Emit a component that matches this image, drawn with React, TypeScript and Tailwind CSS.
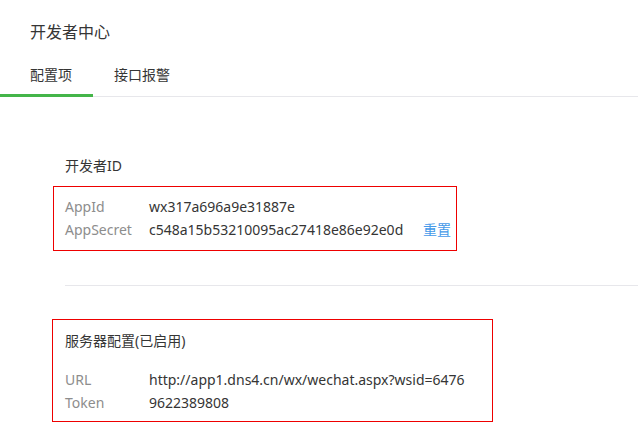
const Row = ({ label, value, extra }: { label: string; value: string; extra?: string }) => {
  return (
    <div className="flex h-[23px] items-center leading-[23px]">
      <span className="w-[84px] shrink-0 text-[#8d8d8d]">{label}</span>
      <span className="whitespace-nowrap text-[#353535]">{value}</span>
      {extra && <a className="ml-auto mr-[5px] cursor-pointer text-[#459ae9]">{extra}</a>}
    </div>
  );
};

const App = () => {
  return (
    <div
      className="h-[439px] w-[638px] overflow-hidden bg-white text-[14px] text-[#353535]"
      style={{ fontFamily: '"Noto Sans", "Noto Sans CJK SC", sans-serif' }}
    >
      <h1 className="pl-[30px] pt-[20px] text-[16px] leading-6 font-normal">开发者中心</h1>

      <div className="flex border-b border-[#e7e7eb]">
        <div className="-mb-px w-[93px] border-b-[3px] border-[#44b549] pb-[8px] pl-[30px] pt-[20px] leading-[22px]">
          配置项
        </div>
        <div className="-mb-px pb-[8px] pl-[21px] pt-[20px] leading-[22px]">接口报警</div>
      </div>

      <div className="pl-[65px] pt-[58px] leading-[22px]">开发者ID</div>

      <div className="ml-[53px] mt-[9px] h-[65px] w-[404px] border border-[#ee0000] pb-[8px] pl-[11px] pt-[8px]">
        <Row label="AppId" value="wx317a696a9e31887e" />
        <Row label="AppSecret" value="c548a15b53210095ac27418e86e92e0d" extra="重置" />
      </div>

      <div className="ml-[65px] mt-[34px] border-t border-[#e7e7eb]"></div>

      <div className="ml-[52px] mt-[33px] h-[103px] w-[441px] border border-[#ee0000] pl-[12px] pt-[10px]">
        <div className="leading-[22px]">服务器配置(已启用)</div>
        <div className="mt-[16px]">
          <Row label="URL" value="http://app1.dns4.cn/wx/wechat.aspx?wsid=6476" />
          <Row label="Token" value="9622389808" />
        </div>
      </div>
    </div>
  );
};

export default App;
